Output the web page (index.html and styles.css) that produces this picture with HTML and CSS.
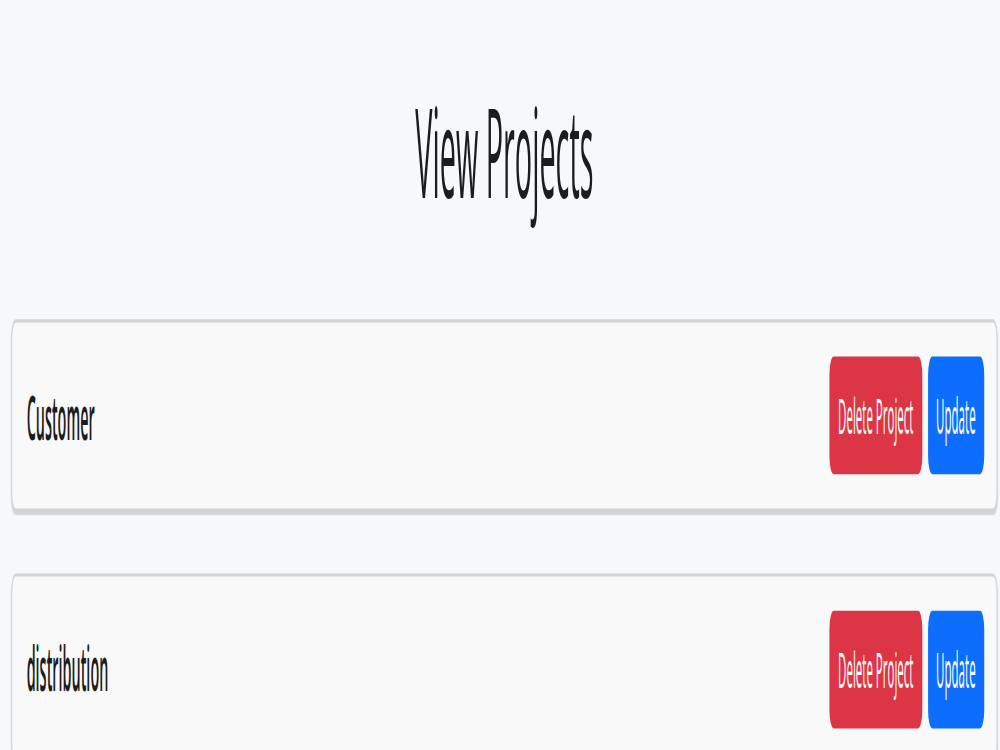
FILE: index.html
```html
<!DOCTYPE html>
<html lang="en">
<head>
    <meta charset="UTF-8">
    <title>View Projects</title>
    <link rel="stylesheet" href="styles.css">
</head>
<body>
    <div class="frame">
        <div class="page">
            <h1 class="title">View Projects</h1>
            <div class="project">
                <span class="project-name">Customer</span>
                <div class="actions">
                    <button class="btn btn-delete">Delete Project</button>
                    <button class="btn btn-update">Update</button>
                </div>
            </div>
            <div class="project">
                <span class="project-name">distribution</span>
                <div class="actions">
                    <button class="btn btn-delete">Delete Project</button>
                    <button class="btn btn-update">Update</button>
                </div>
            </div>
        </div>
    </div>
</body>
</html>
```

FILE: styles.css
```css
html, body {
    margin: 0;
    height: 750px;
    overflow: hidden;
    background-color: #f7f8fa;
}
.frame {
    width: 1000px;
    height: 750px;
    overflow: hidden;
}
/* the shot is squeezed sideways and stretched in height */
.page {
    width: 1389px;
    height: 242px;
    box-sizing: border-box;
    padding: 25px 4px 0 16px;
    transform: scale(0.72, 3.1);
    transform-origin: 0 0;
    font-family: "Segoe UI", "Open Sans", sans-serif;
    color: #1a1d20;
}
.title {
    margin: 0 0 30px;
    font-size: 40px;
    font-weight: 400;
    line-height: 48px;
    text-align: center;
}
.project {
    display: flex;
    align-items: center;
    justify-content: space-between;
    padding: 11px 17.5px 10.5px 20px;
    margin-bottom: 20px;
    background-color: #f9f9f9;
    border: 1px solid #d3d3d3;
    border-radius: 6px;
    box-shadow: 0 1px 1px rgba(0,0,0,0.15);
}
.project-name {
    font-size: 20px;
    font-weight: 600;
}
.actions {
    display: flex;
    gap: 8px;
}
.btn {
    height: 38px;
    padding: 0 12px;
    border: none;
    border-radius: 6px;
    color: white;
    font-family: inherit;
    font-size: 16px;
    cursor: pointer;
}
.btn-delete {
    background-color: #dc3545;
}
.btn-update {
    padding: 0 11.5px;
    background-color: #0d6efd;
}
```
